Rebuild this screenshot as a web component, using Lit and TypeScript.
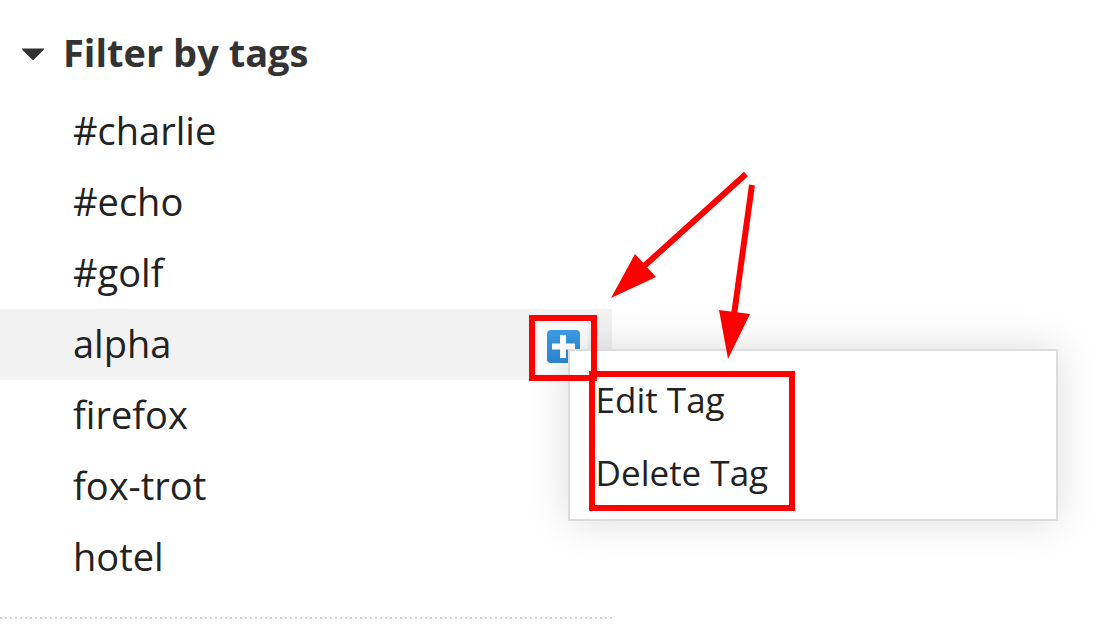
import { LitElement, html, css, svg } from "lit";
import { customElement, property, state } from "lit/decorators.js";

@customElement("tag-menu")
class TagMenu extends LitElement {
  static styles = css`
    :host {
      display: block;
      box-sizing: border-box;
      width: 490px;
      padding: 12px 0 10px;
      border: 2px solid #dcdcdc;
      background: #fff;
      box-shadow: 0 0 40px rgba(0, 0, 0, 0.14);
    }
    .item {
      display: block;
      width: 100%;
      padding: 0 26px;
      border: 0;
      background: none;
      color: #222;
      font: 35px/73px "Open Sans", sans-serif;
      text-align: left;
    }
  `;
  render() {
    return html`
      <button class="item" type="button">Edit Tag</button>
      <button class="item" type="button">Delete Tag</button>
    `;
  }
}

@customElement("app-root")
export class AppRoot extends LitElement {
  @property({ attribute: false })
  tags = ["#charlie", "#echo", "#golf", "alpha", "firefox", "fox-trot", "hotel"];

  @state()
  active = "alpha";

  static styles = css`
    :host {
      display: block;
      position: relative;
      min-height: 100vh;
      overflow: hidden;
      background: #fff;
      color: #222;
      font-family: "Open Sans", sans-serif;
    }
    .panel {
      width: 55%;
      padding-top: 12px;
    }
    .heading {
      display: flex;
      align-items: center;
      gap: 18px;
      margin: 0;
      padding: 0 0 4px 19px;
      color: #333;
      font-size: 38px;
      line-height: 80px;
    }
    .list {
      margin: 0;
      padding: 0 0 24px;
      list-style: none;
    }
    .divider {
      height: 2px;
      margin: 0;
      border: 0;
      background: repeating-linear-gradient(to right, #d4d4d4 0 2px, transparent 2px 5px);
    }
    .row {
      position: relative;
      display: flex;
      align-items: flex-start;
      justify-content: space-between;
      height: 71px;
      padding: 0 24px 0 73px;
    }
    .row.active {
      background: #f2f2f2;
    }
    .name {
      color: inherit;
      font-size: 38px;
      line-height: 69px;
      text-decoration: none;
    }
    .add {
      display: flex;
      margin-top: 11px;
      padding: 10px 8px;
      border: 0;
      background: #fcfcfc;
    }
    .menu {
      position: absolute;
      top: 40px;
      left: calc(100% - 44px);
    }
    .marks {
      position: absolute;
      top: 0;
      left: 0;
      pointer-events: none;
    }
  `;

  private plus() {
    return html`<button class="add" type="button" aria-label="Tag actions">
      <svg width="34" height="34" viewBox="0 0 34 34">
        <defs>
          <linearGradient id="blue" x1="0" y1="0" x2="0" y2="1">
            <stop offset="0" stop-color="#3c9ce4" />
            <stop offset="1" stop-color="#2f86d0" />
          </linearGradient>
        </defs>
        <rect x="1" width="33" height="33" rx="4" fill="url(#blue)" />
        <path d="M17 5v23M6 16.500h23" stroke="#fff" stroke-width="6" />
      </svg>
    </button>`;
  }

  private marks() {
    return svg`
      <g fill="none" stroke="#f00" stroke-width="6">
        <rect x="532" y="318" width="62" height="60" />
        <rect x="592" y="374" width="200" height="134" />
        <path d="M746 174L642 268M752 185L734 315" />
      </g>
      <path d="M611 298L635 254L656 277ZM728 359L719 310L750 314Z" fill="#f00" />
    `;
  }

  render() {
    return html`
      <section class="panel">
        <h2 class="heading">
          <svg width="26" height="20" viewBox="0 0 26 20">
            <path d="M3 6.500h22q0 1-1 2l-9 9q-1 1-2 0l-9-9q-1-1-1-2z" fill="#333" />
          </svg>
          Filter by tags
        </h2>
        <ul class="list">
          ${this.tags.map((tag) =>
            tag === this.active
              ? html`<li class="row active">
                  <a class="name" href="#">${tag}</a>${this.plus()}
                  <tag-menu class="menu"></tag-menu>
                </li>`
              : html`<li class="row"><a class="name" href="#">${tag}</a></li>`
          )}
        </ul>
        <hr class="divider" />
      </section>
      <svg class="marks" width="1112" height="642" viewBox="0 0 1112 642">${this.marks()}</svg>
    `;
  }
}
